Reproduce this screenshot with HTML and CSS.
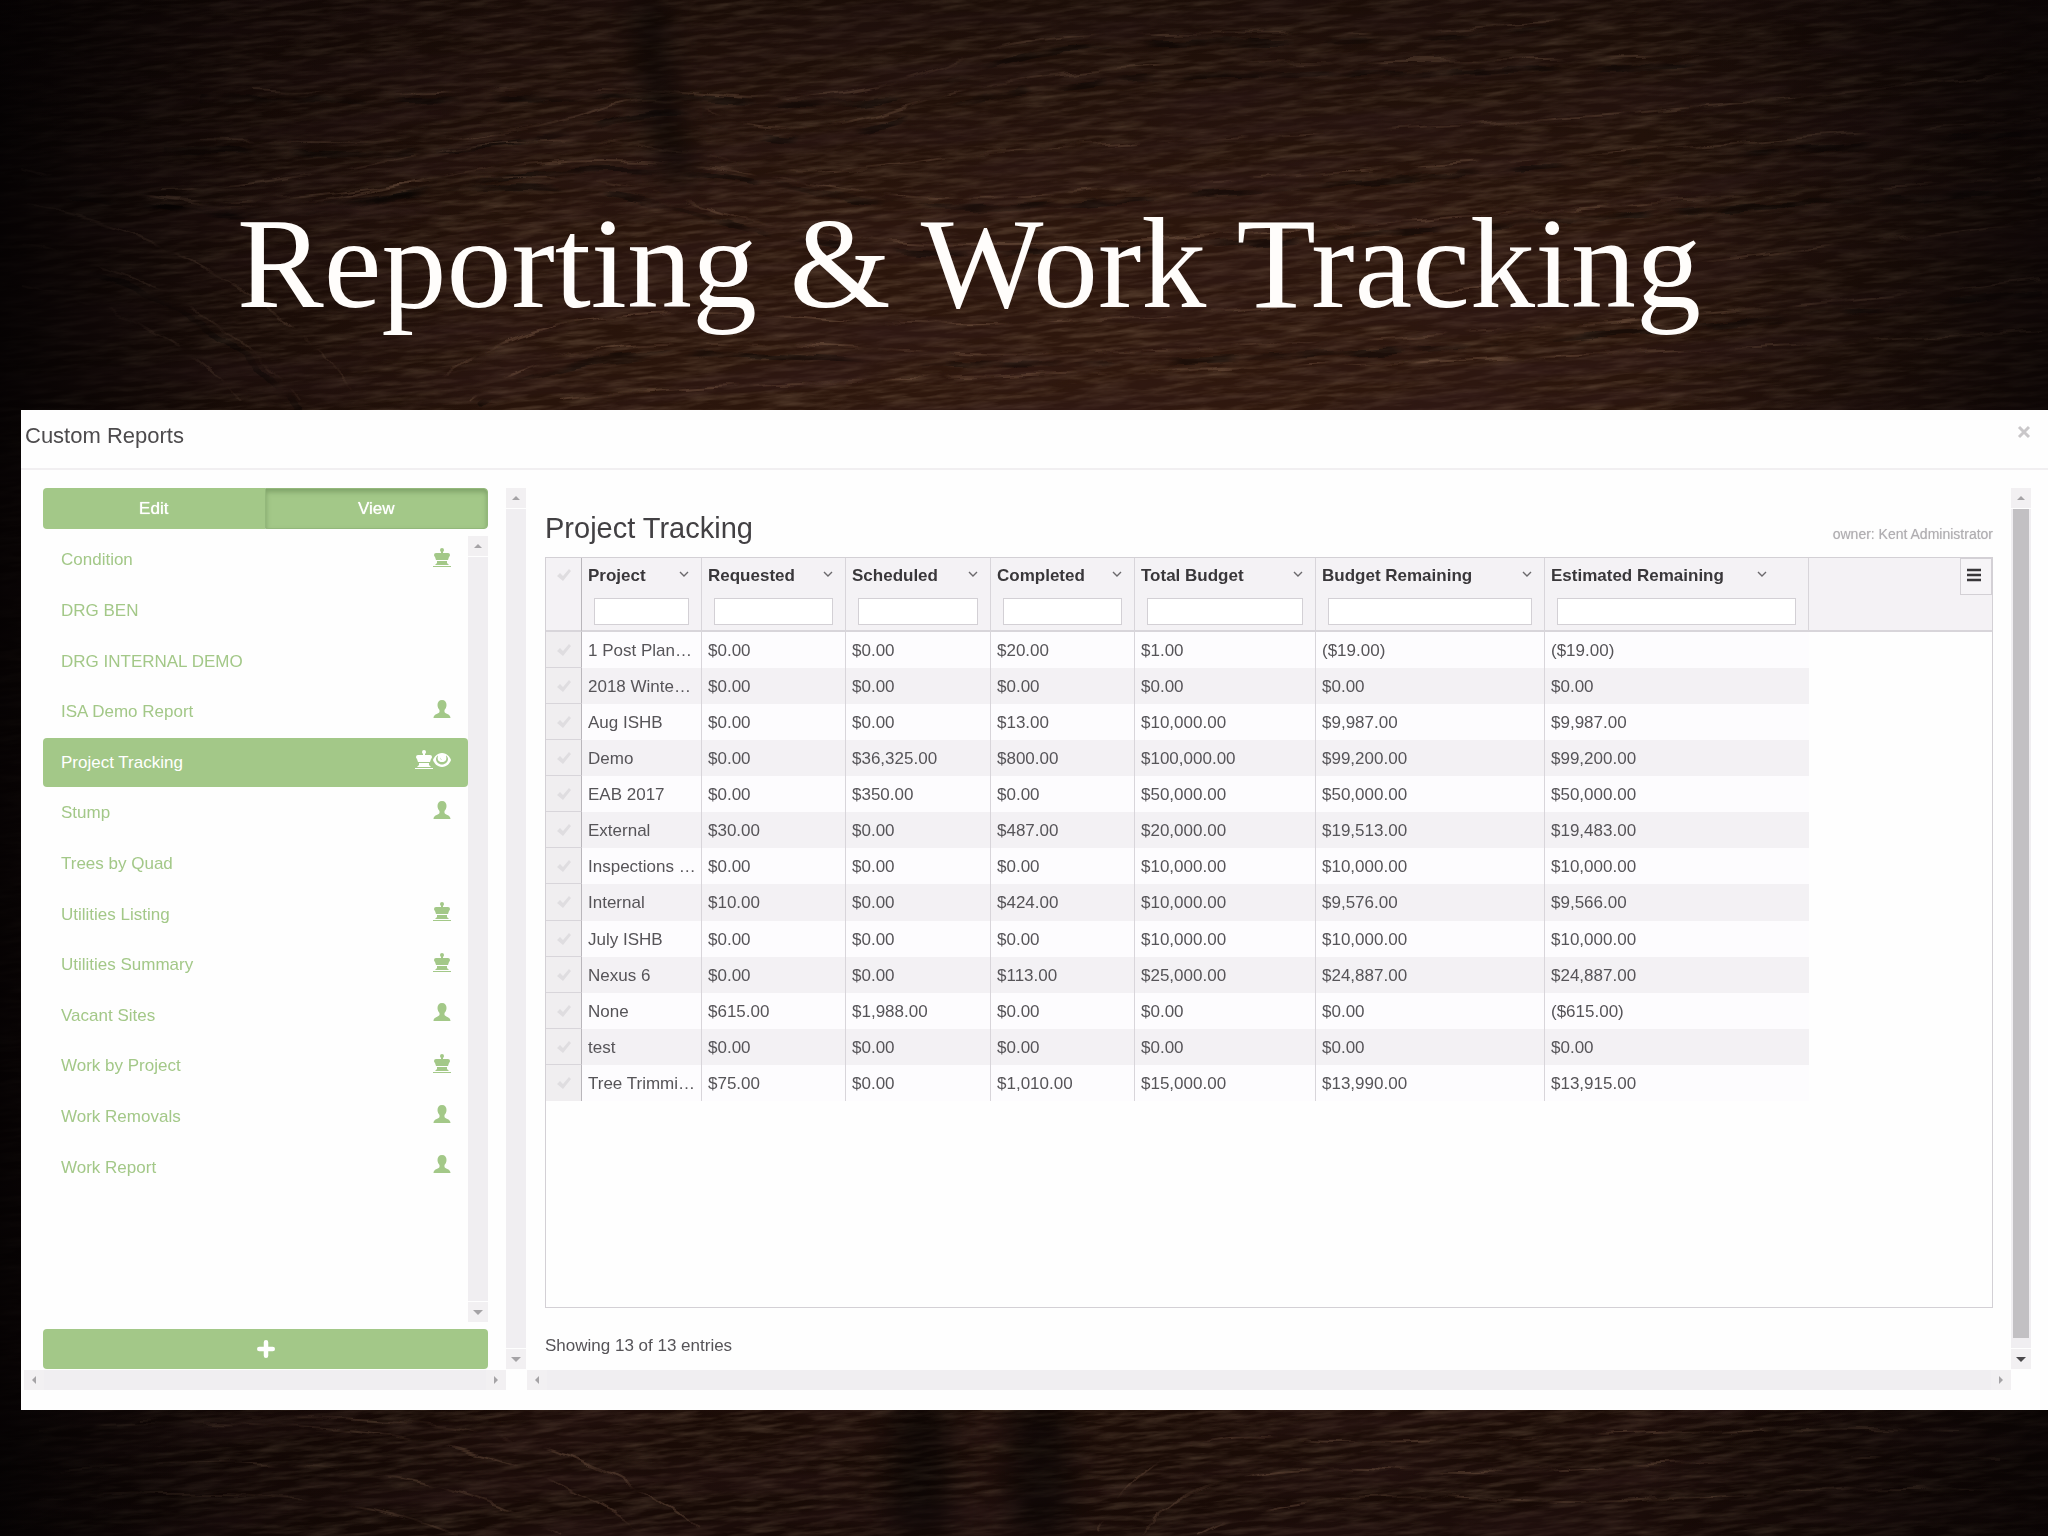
FILE: index.html
```html
<!DOCTYPE html>
<html lang="en">
<head>
<meta charset="utf-8">
<title>Reporting &amp; Work Tracking</title>
<link rel="stylesheet" href="styles.css">
</head>
<body>
<svg class="wood" viewBox="0 0 2048 1536" preserveAspectRatio="xMidYMid slice" aria-hidden="true">
  <defs>
    <filter id="grain" x="0" y="0" width="100%" height="100%">
      <feTurbulence type="fractalNoise" baseFrequency="0.025 0.2" numOctaves="4" seed="7"/>
      <feColorMatrix values="0 0 0 0 0.36  0 0 0 0 0.24  0 0 0 0 0.15  1.8 0 0 0 -0.7"/>
    </filter>
    <filter id="pores" x="0" y="0" width="100%" height="100%">
      <feTurbulence type="fractalNoise" baseFrequency="0.005 0.035" numOctaves="4" seed="21"/>
      <feColorMatrix values="0 0 0 0 0.03  0 0 0 0 0.01  0 0 0 0 0.01  0 2.4 0 0 -0.9"/>
    </filter>
    <filter id="rough" x="-5%" y="-5%" width="110%" height="110%">
      <feTurbulence type="fractalNoise" baseFrequency="0.02 0.05" numOctaves="3" seed="4" result="n"/>
      <feDisplacementMap in="SourceGraphic" in2="n" scale="12" xChannelSelector="R" yChannelSelector="G" result="d"/>
      <feTurbulence type="fractalNoise" baseFrequency="0.02 0.04" numOctaves="2" seed="9"/>
      <feColorMatrix values="0 0 0 0 1  0 0 0 0 1  0 0 0 0 1  4 0 0 0 -1.5"/>
      <feComposite in="d" operator="in"/>
    </filter>
    <filter id="soft" x="-100%" y="-10%" width="300%" height="120%"><feGaussianBlur stdDeviation="14"/></filter>
    <radialGradient id="glow" cx="0.56" cy="0.36" r="0.66">
      <stop offset="0" stop-color="#331a0f"/><stop offset="0.55" stop-color="#26130a"/><stop offset="1" stop-color="#1a0b06"/>
    </radialGradient>
    <linearGradient id="edges">
      <stop offset="0" stop-color="#030102" stop-opacity="0.9"/><stop offset="0.12" stop-color="#030102" stop-opacity="0.3"/><stop offset="0.25" stop-color="#030102" stop-opacity="0"/>
      <stop offset="0.8" stop-color="#030102" stop-opacity="0"/><stop offset="1" stop-color="#030102" stop-opacity="0.7"/>
    </linearGradient>
    <linearGradient id="fade" x2="0" y2="1">
      <stop offset="0" stop-color="#030102" stop-opacity="0.3"/><stop offset="0.15" stop-color="#030102" stop-opacity="0"/>
      <stop offset="0.85" stop-color="#030102" stop-opacity="0"/><stop offset="1" stop-color="#030102" stop-opacity="0.15"/>
    </linearGradient>
  </defs>
  <rect width="2048" height="1536" fill="url(#glow)"/>
  <g transform="rotate(-5 1024 768)">
    <rect x="-100" y="-120" width="2260" height="1780" filter="url(#grain)" opacity="0.36"/>
    <rect x="-100" y="-120" width="2260" height="1780" filter="url(#pores)" opacity="0.5"/>
  </g>
  <g fill="none" stroke="#080303" stroke-width="6" stroke-opacity="0.4" filter="url(#rough)">
    <path d="M200 98C420 106 560 92 690 98S860 118 980 70S1300 58 1560 28"/>
    <path d="M160 150C340 156 480 160 610 122S710 178 910 118S1260 82 1700 66"/>
    <path d="M120 200C320 248 410 170 610 170S810 220 1050 205S1500 172 2040 132"/>
    <path d="M20 180C300 270 440 132 700 215S1260 227 2040 192"/>
    <path d="M20 255C120 270 250 340 300 410M480 405C560 342 700 352 900 362S1500 352 2040 292"/>
  </g>
  <g fill="none" stroke="#80604a" stroke-width="2" stroke-opacity="0.4" filter="url(#rough)">
    <path d="M250 90C420 100 560 82 660 90S840 110 960 60S1300 50 1560 20"/>
    <path d="M200 140C340 145 480 150 600 110S700 170 900 108S1260 70 1700 55"/>
    <path d="M160 190C330 190 440 130 600 142S740 190 930 160S1400 150 2040 70"/>
    <path d="M120 190C320 240 400 160 600 160S800 210 1040 195S1500 160 2040 120"/>
    <path d="M20 170C300 260 440 120 700 205S1260 215 2040 180"/>
    <path d="M20 205C150 220 300 310 350 390M420 400C490 320 620 300 840 320S1500 290 2040 220"/>
    <path d="M20 245C120 260 250 330 300 400M470 400C560 330 700 340 900 350S1500 340 2040 280"/>
    <path d="M20 285C100 300 190 340 240 400M560 400C800 370 1300 380 2040 330"/>
    <path d="M40 1430C300 1410 500 1430 640 1530M140 1420C400 1410 560 1420 700 1530"/>
    <path d="M60 1470C300 1450 450 1470 560 1536M40 1500C200 1490 350 1490 460 1536"/>
    <path d="M1100 1530C1140 1450 1200 1430 1300 1440S1700 1420 1960 1430"/>
    <path d="M1140 1536C1180 1480 1260 1460 1400 1470S1700 1450 2000 1460"/>
    <path d="M1200 1536C1260 1500 1360 1490 1500 1500S1800 1480 2000 1490"/>
  </g>
  <g fill="none" stroke="#060202" stroke-opacity="0.5" filter="url(#soft)">
    <path d="M645 0C660 60 650 120 685 180" stroke-width="34"/>
    <path d="M920 1400V1536M1040 1400V1536" stroke-width="60"/>
  </g>
  <rect width="2048" height="1536" fill="url(#edges)"/>
  <rect width="2048" height="1536" fill="url(#fade)"/>
</svg>

<svg class="sprite" aria-hidden="true">
  <symbol id="king" viewBox="0 0 18 20"><path d="M9 0a2 2 0 0 1 2 2q0 1-1 2v1h5q2 0 2 2 0 1-1 2l-1 3H3L2 9Q1 8 1 7q0-2 2-2h5V4Q7 3 7 2a2 2 0 0 1 2-2zM4 13h10v2H4zM4 15l-2 2h14l-2-2zM0 18h18v1H0z"/></symbol>
  <symbol id="user" viewBox="0 0 18 20"><path d="M9 0c3 0 4.500 2 4.500 5 0 2-1 4-2 5v2c1 2 6 2 6 6H.500c0-4 5-4 6-6v-2c-1-1-2-3-2-5 0-3 1.500-5 4.500-5z"/></symbol>
  <symbol id="eye" viewBox="0 0 18 20"><path fill-rule="evenodd" d="M9 3c5 0 8 4 9 7-1 3-4 7-9 7s-8-4-9-7c1-3 4-7 9-7zm-6 6c0 3 3 5.500 6 5.500s6-2.500 6-5.500c0-1-1-3-2-3.500 1 4 0 6.500-4 6.500S4 9.500 5 5.500C4 6 3 8 3 9zm4-2c0 2 1 3 2 3-1-1-2-2-2-3z"/></symbol>
  <symbol id="check" viewBox="0 0 14 14"><path d="M0 8l3-3 3 3 6-7 2 2-8 10z"/></symbol>
  <symbol id="chevron" viewBox="0 0 10 6"><path d="M1 1l4 4 4-4" fill="none" stroke="currentColor" stroke-width="1.4"/></symbol>
</svg>

<main class="slide">
  <h1 class="slide-title">Reporting &amp; Work Tracking</h1>

  <section class="panel" aria-label="Custom Reports">
    <header class="panel-head">
      <h2>Custom Reports</h2>
      <button class="close" type="button" aria-label="Close"><svg viewBox="0 0 14 14"><path d="M2 2l10 10M12 2L2 12" stroke="currentColor" stroke-width="3"/></svg></button>
    </header>

    <div class="panel-body">
      <div class="pane pane-side">
        <div class="side">
          <div class="modes"><button type="button">Edit</button><button class="on" type="button">View</button></div>
          <div class="list-box">
            <ul class="reports">
              <li><a href="#">Condition<span><svg><use href="#king"/></svg></span></a></li>
              <li><a href="#">DRG BEN</a></li>
              <li><a href="#">DRG INTERNAL DEMO</a></li>
              <li><a href="#">ISA Demo Report<span><svg><use href="#user"/></svg></span></a></li>
              <li><a class="on" href="#">Project Tracking<span><svg><use href="#king"/></svg><svg><use href="#eye"/></svg></span></a></li>
              <li><a href="#">Stump<span><svg><use href="#user"/></svg></span></a></li>
              <li><a href="#">Trees by Quad</a></li>
              <li><a href="#">Utilities Listing<span><svg><use href="#king"/></svg></span></a></li>
              <li><a href="#">Utilities Summary<span><svg><use href="#king"/></svg></span></a></li>
              <li><a href="#">Vacant Sites<span><svg><use href="#user"/></svg></span></a></li>
              <li><a href="#">Work by Project<span><svg><use href="#king"/></svg></span></a></li>
              <li><a href="#">Work Removals<span><svg><use href="#user"/></svg></span></a></li>
              <li><a href="#">Work Report<span><svg><use href="#user"/></svg></span></a></li>
            </ul>
            <div class="vbar"><i class="up"></i><b></b><i class="down"></i></div>
          </div>
          <button class="add" type="button" aria-label="Add report"><svg viewBox="0 0 16 16"><path d="M8 2v12M2 8h12" stroke="currentColor" stroke-width="4" stroke-linecap="round"/></svg></button>
        </div>
        <div class="vbar"><i class="up"></i><b></b><i class="down"></i></div>
        <div class="hbar"><i class="left"></i><i class="right"></i></div>
      </div>

      <div class="pane pane-main">
        <div class="report">
          <div class="report-head"><h3>Project Tracking</h3><p>owner: Kent Administrator</p></div>
          <div class="grid">
            <table>
              <colgroup><col class="w-check"><col class="w-name"><col class="w-money"><col class="w-mid"><col class="w-money"><col class="w-total"><col class="w-remain"><col class="w-est"><col></colgroup>
              <thead>
                <tr>
                  <th class="pick"><svg><use href="#check"/></svg></th>
                  <th><div class="name"><label for="f1">Project</label><svg><use href="#chevron"/></svg></div><input id="f1" type="text"></th>
                  <th><div class="name"><label for="f2">Requested</label><svg><use href="#chevron"/></svg></div><input id="f2" type="text"></th>
                  <th><div class="name"><label for="f3">Scheduled</label><svg><use href="#chevron"/></svg></div><input id="f3" type="text"></th>
                  <th><div class="name"><label for="f4">Completed</label><svg><use href="#chevron"/></svg></div><input id="f4" type="text"></th>
                  <th><div class="name"><label for="f5">Total Budget</label><svg><use href="#chevron"/></svg></div><input id="f5" type="text"></th>
                  <th><div class="name"><label for="f6">Budget Remaining</label><svg><use href="#chevron"/></svg></div><input id="f6" type="text"></th>
                  <th><div class="name name-last"><label for="f7">Estimated Remaining</label><svg><use href="#chevron"/></svg></div><input id="f7" type="text"></th>
                  <th class="rest"><button class="menu" type="button" aria-label="Grid menu"><svg viewBox="0 0 16 14"><path d="M1 2h14M1 7h14M1 12h14" stroke="currentColor" stroke-width="2.6"/></svg></button></th>
                </tr>
              </thead>
              <tbody>
                <tr><td class="pick"><svg><use href="#check"/></svg></td><td>1 Post Plan…</td><td>$0.00</td><td>$0.00</td><td>$20.00</td><td>$1.00</td><td>($19.00)</td><td>($19.00)</td><td class="rest"></td></tr>
                <tr><td class="pick"><svg><use href="#check"/></svg></td><td>2018 Winte…</td><td>$0.00</td><td>$0.00</td><td>$0.00</td><td>$0.00</td><td>$0.00</td><td>$0.00</td><td class="rest"></td></tr>
                <tr><td class="pick"><svg><use href="#check"/></svg></td><td>Aug ISHB</td><td>$0.00</td><td>$0.00</td><td>$13.00</td><td>$10,000.00</td><td>$9,987.00</td><td>$9,987.00</td><td class="rest"></td></tr>
                <tr><td class="pick"><svg><use href="#check"/></svg></td><td>Demo</td><td>$0.00</td><td>$36,325.00</td><td>$800.00</td><td>$100,000.00</td><td>$99,200.00</td><td>$99,200.00</td><td class="rest"></td></tr>
                <tr><td class="pick"><svg><use href="#check"/></svg></td><td>EAB 2017</td><td>$0.00</td><td>$350.00</td><td>$0.00</td><td>$50,000.00</td><td>$50,000.00</td><td>$50,000.00</td><td class="rest"></td></tr>
                <tr><td class="pick"><svg><use href="#check"/></svg></td><td>External</td><td>$30.00</td><td>$0.00</td><td>$487.00</td><td>$20,000.00</td><td>$19,513.00</td><td>$19,483.00</td><td class="rest"></td></tr>
                <tr><td class="pick"><svg><use href="#check"/></svg></td><td>Inspections …</td><td>$0.00</td><td>$0.00</td><td>$0.00</td><td>$10,000.00</td><td>$10,000.00</td><td>$10,000.00</td><td class="rest"></td></tr>
                <tr><td class="pick"><svg><use href="#check"/></svg></td><td>Internal</td><td>$10.00</td><td>$0.00</td><td>$424.00</td><td>$10,000.00</td><td>$9,576.00</td><td>$9,566.00</td><td class="rest"></td></tr>
                <tr><td class="pick"><svg><use href="#check"/></svg></td><td>July ISHB</td><td>$0.00</td><td>$0.00</td><td>$0.00</td><td>$10,000.00</td><td>$10,000.00</td><td>$10,000.00</td><td class="rest"></td></tr>
                <tr><td class="pick"><svg><use href="#check"/></svg></td><td>Nexus 6</td><td>$0.00</td><td>$0.00</td><td>$113.00</td><td>$25,000.00</td><td>$24,887.00</td><td>$24,887.00</td><td class="rest"></td></tr>
                <tr><td class="pick"><svg><use href="#check"/></svg></td><td>None</td><td>$615.00</td><td>$1,988.00</td><td>$0.00</td><td>$0.00</td><td>$0.00</td><td>($615.00)</td><td class="rest"></td></tr>
                <tr><td class="pick"><svg><use href="#check"/></svg></td><td>test</td><td>$0.00</td><td>$0.00</td><td>$0.00</td><td>$0.00</td><td>$0.00</td><td>$0.00</td><td class="rest"></td></tr>
                <tr><td class="pick"><svg><use href="#check"/></svg></td><td>Tree Trimmi…</td><td>$75.00</td><td>$0.00</td><td>$1,010.00</td><td>$15,000.00</td><td>$13,990.00</td><td>$13,915.00</td><td class="rest"></td></tr>
              </tbody>
            </table>
          </div>
          <p class="count">Showing 13 of 13 entries</p>
        </div>
        <div class="vbar"><i class="up"></i><b class="thumb"></b><i class="down dark"></i></div>
        <div class="hbar"><i class="left"></i><i class="right"></i></div>
      </div>
    </div>
  </section>
</main>
</body>
</html>
```
FILE: styles.css
```css
* { box-sizing: border-box; }
body {
  margin: 0;
  background: #0c0403;
  color: #565458;
  font: 17px/22px "Liberation Sans", Arial, sans-serif;
}
h1, h2, h3, p, ul { margin: 0; padding: 0; font-weight: 400; }
button { font: inherit; border: 0; padding: 0; cursor: pointer; }
svg { fill: currentColor; }

.wood { position: fixed; inset: 0; width: 100%; height: 100%; z-index: -1; }
.sprite { position: absolute; width: 0; height: 0; }

.slide { min-height: 100vh; overflow: hidden; }
.slide-title {
  padding: 188px 237px 72px;
  color: #fffdfb;
  font: 130px/150px "Liberation Serif", "Times New Roman", serif;
}

.panel { margin-left: 21px; background: #fefefe; }
.panel-head {
  display: flex;
  justify-content: space-between;
  align-items: flex-start;
  height: 60px;
  padding: 12px 17px 0 4px;
  border-bottom: 2px solid #f1eff1;
}
.panel-head h2 { font-size: 22px; line-height: 27px; color: #4d4b4d; }
.close { width: 14px; height: 14px; margin-top: 3px; background: none; color: #c9c7c9; }
.close svg { display: block; }

.panel-body { display: flex; padding: 18px 17px 20px 3px; }
.pane { display: grid; grid-template-rows: 1fr 20px; row-gap: 1px; }
.pane-side { flex: none; grid-template-columns: 482px 21px; }
.pane-main { flex: 1; grid-template-columns: 1fr 20px; }

.side { display: flex; flex-direction: column; gap: 7px; padding: 0 18px 0 19px; }
.modes { display: flex; height: 41px; }
.modes button { flex: 1; padding-top: 1px; background: #a3c888; color: #fff; border-radius: 4px 0 0 4px; text-shadow: 0 0 1px #fff; }
.modes .on { border-radius: 0 4px 4px 0; border: 1px solid #93b87b; box-shadow: inset 0 3px 5px #7fa269; }
.list-box { display: flex; flex: 1; min-height: 786px; }
.reports { flex: 1; height: 656px; display: flex; flex-direction: column; gap: 2px; list-style: none; }
.reports li { flex: 1; display: flex; }
.reports a {
  flex: 1;
  display: flex;
  align-items: center;
  justify-content: space-between;
  padding: 0 17px 0 18px;
  border-radius: 4px;
  color: #a3c888;
  text-decoration: none;
}
.reports .on { background: #a3c888; color: #fff; }
.reports span { display: flex; padding-bottom: 5px; }
.reports svg { width: 18px; height: 20px; }
.add { height: 40px; border-radius: 4px; background: #a3c888; color: #fff; }
.add svg { display: block; width: 18px; height: 18px; margin: auto; }

.vbar { width: 20px; display: flex; flex-direction: column; gap: 1px; }
.vbar b { flex: 1; background: #f0eef1; }
.vbar .thumb { background: #c2c0c3; border: solid #f0eef1; border-width: 0 2px 10px; }
.vbar i, .hbar i { width: 20px; height: 20px; display: grid; place-items: center; background: #f2f0f2; color: #a5a3a6; }
.hbar { display: flex; justify-content: space-between; background: #f0eef1; }
.pane-side .hbar { width: 482px; }
.vbar i::before, .hbar i::before { content: ""; border: 5px solid transparent; }
.vbar .up::before { border-width: 0 4px 4px; border-bottom-color: currentColor; }
.vbar .down::before { border-bottom-width: 0; border-top-color: currentColor; }
.hbar .left::before { border-width: 4px 4px 4px 0; border-right-color: currentColor; }
.hbar .right::before { border-width: 4px 0 4px 4px; border-left-color: currentColor; }
.vbar .dark { color: #4a484b; }

.report { padding: 0 18px 0 18px; }
.report-head { display: flex; justify-content: space-between; align-items: flex-end; height: 69px; padding-bottom: 13px; }
.report-head h3 { font-size: 29px; line-height: 32px; color: #424043; }
.report-head p { font-size: 14px; line-height: 20px; color: #b0aeb1; text-shadow: 0 0 1px #d0ced1; }
.grid { min-height: 751px; border: 1px solid #d3d0d5; }
.count { padding: 27px 0 12px; }

table { width: 100%; height: 543px; table-layout: fixed; border-collapse: separate; border-spacing: 0; }
.w-check { width: 36px; }
.w-name { width: 120px; }
.w-money { width: 144px; }
.w-mid { width: 145px; }
.w-total { width: 181px; }
.w-remain { width: 229px; }
.w-est { width: 264px; }
th {
  height: 73px;
  padding: 7px 0 5px;
  vertical-align: top;
  text-align: left;
  color: #39373a;
  background: #f4f2f5;
  border-right: 1px solid #d8d5da;
  border-bottom: 2px solid #d8d5da;
}
.name { display: flex; justify-content: space-between; align-items: center; padding: 0 12px 0 6px; }
.name-last { padding-right: 41px; }
.name svg { width: 10px; height: 6px; margin-bottom: 4px; color: #6b696c; }
th input { display: block; width: calc(100% - 24px); height: 27px; margin: 11px 12px 0; padding: 0 4px; border: 1px solid #d3d0d5; background: #fff; font: inherit; }
td { height: 36px; padding: 2px 0 0 6px; white-space: nowrap; background: #fdfcfe; border-right: 1px solid #d8d5da; }
tbody tr:nth-child(even) td { background: #f3f1f4; }
td:nth-child(8) { border-right: 0; }
th.pick, tbody td.pick { padding: 0; text-align: center; color: #dfdde0; border-right: 1px solid #b9b6bb; }
tbody tr td.pick { background: #f0eef0; border-bottom: 1px solid #d8d5da; }
tbody tr:last-child td.pick { border-bottom: 0; }
.pick svg { width: 14px; height: 14px; vertical-align: middle; }
th.pick svg { margin-top: 10px; vertical-align: top; }
th.rest { padding: 0; border-right: 0; }
tbody tr td.rest { background: none; border: 0; }
.menu { display: block; width: 32px; height: 37px; margin-left: auto; background: #f6f4f7; border: 1px solid #d3d0d5; color: #39373a; }
.menu svg { display: block; width: 16px; height: 14px; margin: 0 8px 4px 5px; }
```
